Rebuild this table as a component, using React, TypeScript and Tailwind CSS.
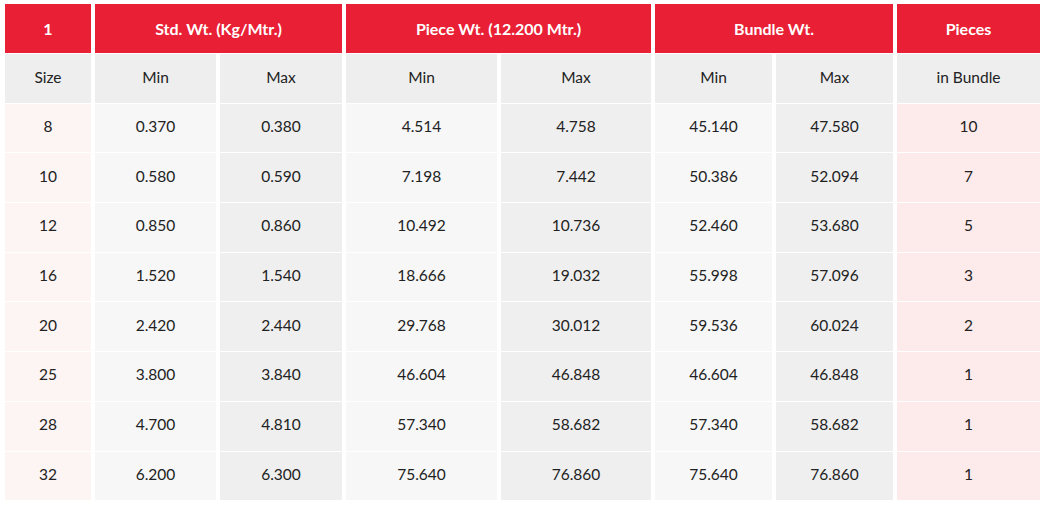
const rows = [
  ['8', '0.370', '0.380', '4.514', '4.758', '45.140', '47.580', '10'],
  ['10', '0.580', '0.590', '7.198', '7.442', '50.386', '52.094', '7'],
  ['12', '0.850', '0.860', '10.492', '10.736', '52.460', '53.680', '5'],
  ['16', '1.520', '1.540', '18.666', '19.032', '55.998', '57.096', '3'],
  ['20', '2.420', '2.440', '29.768', '30.012', '59.536', '60.024', '2'],
  ['25', '3.800', '3.840', '46.604', '46.848', '46.604', '46.848', '1'],
  ['28', '4.700', '4.810', '57.340', '58.682', '57.340', '58.682', '1'],
  ['32', '6.200', '6.300', '75.640', '76.860', '75.640', '76.860', '1'],
];

// background per body column
const bodyBg = [
  'bg-[#fdf4f4]',
  'bg-[#f7f7f7]',
  'bg-[#efefef]',
  'bg-[#f7f7f7]',
  'bg-[#efefef]',
  'bg-[#f7f7f7]',
  'bg-[#efefef]',
  'bg-[#fdeaea]',
];

const subHeads = ['Size', 'Min', 'Max', 'Min', 'Max', 'Min', 'Max', 'in Bundle'];

const head = 'bg-[#e91f35] text-white font-bold text-[16px] flex items-center justify-center';

export default function App() {
  return (
    <div className="bg-white w-[1047px] h-[507px] pt-[4px] pl-[5px] font-['Lato',sans-serif] text-[15.5px] text-[#222]">
      <div className="grid grid-cols-[86px_121px_122px_151px_150px_117px_117px_143px] gap-x-1 gap-y-px auto-rows-[48.7px] grid-rows-[49px]">
        {/* Header */}
        <div className={head}>1</div>
        <div className={`col-span-2 ${head}`}>Std. Wt. (Kg/Mtr.)</div>
        <div className={`col-span-2 ${head}`}>Piece Wt. (12.200 Mtr.)</div>
        <div className={`col-span-2 ${head}`}>Bundle Wt.</div>
        <div className={head}>Pieces</div>

        {/* Sub header */}
        {subHeads.map((h, i) => (
          <div key={i} className="bg-[#eeeeee] flex items-center justify-center pb-[2px]">{h}</div>
        ))}

        {/* Body */}
        {rows.map((r, ri) =>
          r.map((v, ci) => (
            <div key={ri + '-' + ci} className={`${bodyBg[ci]} flex items-center justify-center pb-[3px]`}>
              {v}
            </div>
          ))
        )}
      </div>
    </div>
  );
}
